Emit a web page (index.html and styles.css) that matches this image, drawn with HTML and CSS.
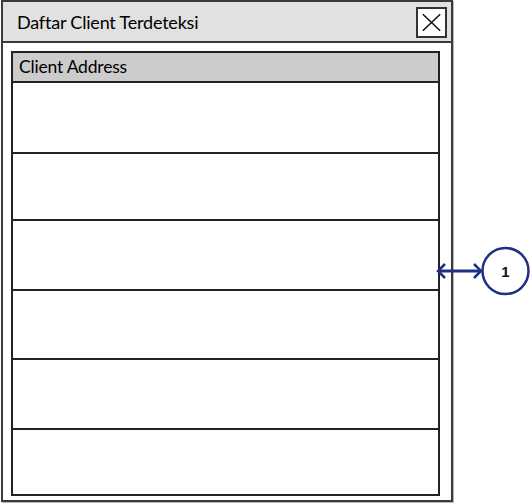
FILE: index.html
```html
<!DOCTYPE html>
<html>
<head>
<meta charset="utf-8">
<link rel="stylesheet" href="styles.css">
</head>
<body>
<div class="window">
  <div class="titlebar">
    <span class="title">Daftar Client Terdeteksi</span>
    <div class="close">
      <svg width="28" height="27" viewBox="0 0 28 27"><path d="M5 5 L23 22 M23 5 L5 22" stroke="#111" stroke-width="1.6" fill="none"/></svg>
    </div>
  </div>
  <div class="content">
    <div class="list">
      <div class="header">Client Address</div>
      <div class="row r1"></div>
      <div class="row r2"></div>
      <div class="row r3"></div>
      <div class="row r4"></div>
      <div class="row r5"></div>
      <div class="row r6"></div>
    </div>
  </div>
</div>
<svg class="callout" width="100" height="60" viewBox="0 0 100 60">
  <path d="M8 31 L51 31" stroke="#1f2f86" stroke-width="3" fill="none"/>
  <path d="M15 24 L8 31 L15 38" stroke="#1f2f86" stroke-width="2.5" fill="none"/>
  <path d="M44 24 L51 31 L44 38" stroke="#1f2f86" stroke-width="2.5" fill="none"/>
  <circle cx="75.5" cy="31" r="23" stroke="#1f2f86" stroke-width="2.5" fill="#fff"/>
  <text x="75.5" y="36.5" text-anchor="middle" class="num">1</text>
</svg>
</body>
</html>
```
FILE: styles.css
```css
html, body {
  margin: 0;
  padding: 0;
  background: #fff;
}
body {
  position: relative;
  width: 531px;
  height: 504px;
  overflow: hidden;
  font-family: Lato, "Open Sans", sans-serif;
}
.window {
  margin-left: 1px;
  width: 452px;
  height: 502px;
  box-sizing: border-box;
  border: 2px solid #3a3a3a;
  box-shadow: 1px 1px 0 #b8b8b8;
  display: flex;
  flex-direction: column;
  background: #fff;
}
.titlebar {
  height: 41px;
  box-sizing: border-box;
  background: #e1e1e1;
  border-bottom: 2px solid #3a3a3a;
  display: flex;
  align-items: center;
  justify-content: space-between;
  padding: 0 4px 0 14px;
}
.title {
  font-size: 18px;
  color: #000;
  letter-spacing: -0.2px;
}
.close {
  width: 31px;
  height: 31px;
  box-sizing: border-box;
  border: 2px solid #333;
  background: #fff;
  display: flex;
  align-items: center;
  justify-content: center;
  margin-top: 1px;
}
.close svg { display: block; }
.content {
  flex: 1;
  padding: 8px 11px 4px 8px;
  display: flex;
}
.list {
  flex: 1;
  border: 2px solid #222;
  display: flex;
  flex-direction: column;
}
.header {
  height: 28px;
  box-sizing: border-box;
  background: #cccccc;
  font-size: 17.5px;
  color: #000;
  padding: 3px 0 0 6px;
  line-height: 22px;
  letter-spacing: -0.2px;
}
.row {
  border-top: 2px solid #222;
  box-sizing: border-box;
}
.r1 { height: 71px; }
.r2 { height: 67px; }
.r3 { height: 70px; }
.r4 { height: 69px; }
.r5 { height: 70px; }
.r6 { flex: 1; }
.callout {
  position: absolute;
  left: 430px;
  top: 240px;
}
.num {
  font-family: "Liberation Sans", Arial, sans-serif;
  font-weight: bold;
  font-size: 15px;
  fill: #111;
}
```
